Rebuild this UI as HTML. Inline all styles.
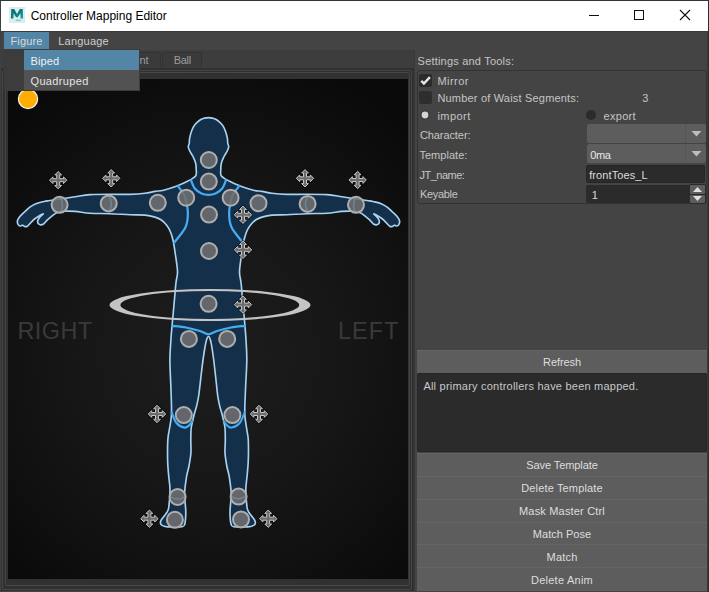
<!DOCTYPE html>
<html><head><meta charset="utf-8">
<style>
*{box-sizing:border-box;margin:0;padding:0}
html,body{width:709px;height:592px;overflow:hidden;background:#444444;font-family:"Liberation Sans",sans-serif;}
.a{position:absolute}
.t{position:absolute;white-space:pre;font-size:11px;color:#c4c4c4;line-height:1}
</style></head><body>
<!-- window frame -->
<div class="a" style="left:0;top:0;width:709px;height:592px;background:#2e2e2e"></div>
<div class="a" style="left:1px;top:31px;width:707px;height:561px;background:#444"></div>
<!-- title bar -->
<div class="a" style="left:1px;top:1px;width:707px;height:30px;background:#ffffff"></div>
<!-- maya icon -->
<div class="a" style="left:9px;top:7px;width:16px;height:16px;background:#d9eeee"></div>
<svg class="a" style="left:9px;top:7px" width="16" height="16" viewBox="0 0 16 16">
 <defs><linearGradient id="mg" x1="0" y1="0" x2="1" y2="1"><stop offset="0" stop-color="#0d6a70"/><stop offset="0.5" stop-color="#0f7d80"/><stop offset="1" stop-color="#1ba3a3"/></linearGradient></defs>
 <path d="M1.9 11.6 L2.3 2 L5.2 2 L8 7 L10.8 2 L13.7 2 L14.1 11.6 L11.6 11.6 L11.4 6.2 L8.9 10.2 L7.1 10.2 L4.6 6.2 L4.4 11.6 Z" fill="url(#mg)"/>
 <rect x="6.8" y="12.7" width="5" height="1" fill="#6ab8b8"/>
</svg>
<!-- window buttons -->
<div class="a" style="left:589px;top:15px;width:10px;height:1px;background:#111"></div>
<div class="a" style="left:634px;top:10px;width:10px;height:10px;border:1px solid #111"></div>
<svg class="a" style="left:679px;top:9px" width="12" height="12" viewBox="0 0 12 12"><path d="M1 1 L11 11 M11 1 L1 11" stroke="#111" stroke-width="1.1"/></svg>

<!-- menu bar -->
<div class="a" style="left:1px;top:31px;width:707px;height:1px;background:#3a3a3a"></div>
<div class="a" style="left:4px;top:32px;width:45px;height:17px;background:#5285a6"></div>

<!-- tab widget -->
<div class="a" style="left:1px;top:50px;width:414px;height:541px;background:#3d3d3d"></div>
<div class="a" style="left:83px;top:52px;width:78px;height:17px;background:#3a3a3a;border:1px solid #333;border-bottom:none;border-radius:3px 3px 0 0"></div>
<div class="a" style="left:162px;top:52px;width:40px;height:17px;background:#3a3a3a;border:1px solid #333;border-bottom:none;border-radius:3px 3px 0 0"></div>
<!-- frame -->
<div class="a" style="left:1px;top:68px;width:413px;height:523px;border:1px solid #333;background:#2f2f2f"></div>
<div class="a" style="left:2px;top:70px;width:410px;height:520px;border:1px solid #464646;border-radius:2px;background:#303030"></div>
<div class="a" style="left:5px;top:72px;width:405px;height:514px;border:1px solid #474747;border-radius:2px;background:#313131"></div>
<!-- figure canvas -->
<div class="a" style="left:8px;top:79px;width:400px;height:500px;background:radial-gradient(ellipse 72% 62% at 50% 55%,#1d1d1d 0%,#171717 45%,#0a0a0a 100%)"></div>

<!-- right panel -->
<div class="a" style="left:414px;top:50px;width:1px;height:541px;background:#393939"></div>
<div class="a" style="left:417px;top:70px;width:290px;height:134px;border:1px solid #333;border-radius:3px;background:#444"></div>
<div class="a" style="left:419px;top:74px;width:13px;height:13px;background:#2b2b2b;border-radius:2px"></div>
<svg class="a" style="left:419px;top:74px" width="13" height="13" viewBox="0 0 13 13"><path d="M2.3 6.9 L4.9 9.6 L10.9 3.1" stroke="#e6e6e6" stroke-width="2.4" fill="none" stroke-linejoin="miter"/></svg>
<div class="a" style="left:419px;top:91px;width:13px;height:13px;background:#2e2e2e;border-radius:2px"></div>
<svg class="a" style="left:418px;top:108px" width="14" height="14" viewBox="0 0 14 14"><circle cx="7" cy="7" r="4.6" fill="#323232"/><circle cx="7" cy="7" r="3.4" fill="#d4d4d4"/></svg>
<div class="a" style="left:586px;top:110px;width:10px;height:10px;border-radius:50%;background:#2b2b2b"></div>

<div class="a" style="left:587px;top:124px;width:119px;height:19px;background:#5d5d5d;border-radius:2px"></div>
<div class="a" style="left:685px;top:124px;width:1px;height:19px;background:#555"></div>
<svg class="a" style="left:691px;top:131px" width="11" height="6" viewBox="0 0 11 6"><path d="M0.5 0 H10.5 L5.5 5.5 Z" fill="#bdbdbd"/></svg>
<div class="a" style="left:587px;top:144px;width:119px;height:19px;background:#5d5d5d;border-radius:2px"></div>
<div class="a" style="left:685px;top:144px;width:1px;height:19px;background:#555"></div>
<svg class="a" style="left:691px;top:151px" width="11" height="6" viewBox="0 0 11 6"><path d="M0.5 0 H10.5 L5.5 5.5 Z" fill="#bdbdbd"/></svg>
<div class="a" style="left:586px;top:165px;width:119px;height:18px;background:#2b2b2b;border:1px solid #262626;border-radius:2px"></div>
<div class="a" style="left:586px;top:185px;width:104px;height:18px;background:#2b2b2b;border-radius:2px"></div>
<div class="a" style="left:689px;top:184px;width:17px;height:20px;background:#2b2b2b;border-radius:2px"></div>
<div class="a" style="left:690px;top:185px;width:15px;height:9px;background:#5d5d5d;border-radius:1px"></div>
<svg class="a" style="left:693px;top:187px" width="9" height="5" viewBox="0 0 9 5"><path d="M0 5 H9 L4.5 0 Z" fill="#e0e0e0"/></svg>
<div class="a" style="left:690px;top:195px;width:15px;height:8px;background:#5d5d5d;border-radius:1px"></div>
<svg class="a" style="left:693px;top:196px" width="9" height="5" viewBox="0 0 9 5"><path d="M0 0 H9 L4.5 5 Z" fill="#e0e0e0"/></svg>

<!-- refresh -->
<div class="a" style="left:417px;top:350px;width:290px;height:23px;background:#5d5d5d;border-top:1px solid #656565"></div>
<div class="a" style="left:417px;top:373px;width:290px;height:79px;background:#2b2b2b;border:1px solid #262626;border-radius:2px"></div>

<!-- buttons -->
<div class="a" style="left:417px;top:453px;width:290px;height:138px;background:#5d5d5d;border-top:1px solid #656565"></div>
<div class="a" style="left:417px;top:476px;width:290px;height:1px;background:#656565"></div>
<div class="a" style="left:417px;top:499px;width:290px;height:1px;background:#656565"></div>
<div class="a" style="left:417px;top:522px;width:290px;height:1px;background:#656565"></div>
<div class="a" style="left:417px;top:544px;width:290px;height:1px;background:#656565"></div>
<div class="a" style="left:417px;top:567px;width:290px;height:1px;background:#656565"></div>
<div class="a" style="left:707px;top:31px;width:2px;height:561px;background:#3a3a3a"></div><div class="a" style="left:708px;top:0;width:1px;height:592px;background:#2e2e2e"></div>

<div class="a" style="left:0;top:0;width:1px;height:592px;background:#3b4148"></div><div class="a" style="left:0;top:0;width:709px;height:1px;background:#30353b"></div>
<div class="t" style="left:30.7px;top:10px;font-size:12px;letter-spacing:0.0px;color:#000">Controller Mapping Editor</div>
<div class="t" style="left:10.5px;top:36px;font-size:11.0px;letter-spacing:0.13px;color:#dadada">Figure</div>
<div class="t" style="left:58.2px;top:36px;font-size:11.0px;letter-spacing:0.23px;color:#cfcfcf">Language</div>
<div class="t" style="left:173.8px;top:55px;font-size:11.0px;letter-spacing:-0.33px;color:#9c9c9c">Ball</div>
<div class="t" style="left:122.9px;top:55px;font-size:11.0px;letter-spacing:0.0px;color:#9c9c9c">Front</div>
<div class="t" style="left:417.6px;top:56px;font-size:11.0px;letter-spacing:0.2px;color:#c4c4c4">Settings and Tools:</div>
<div class="t" style="left:437.4px;top:76px;font-size:11.0px;letter-spacing:0.46px;color:#c4c4c4">Mirror</div>
<div class="t" style="left:437.4px;top:93px;font-size:11.0px;letter-spacing:0.19px;color:#c4c4c4">Number of Waist Segments:</div>
<div class="t" style="left:642.2px;top:93px;font-size:11.0px;letter-spacing:0px;color:#c4c4c4">3</div>
<div class="t" style="left:437.4px;top:111px;font-size:11.0px;letter-spacing:0.45px;color:#c4c4c4">import</div>
<div class="t" style="left:603.6px;top:111px;font-size:11.0px;letter-spacing:0.27px;color:#c4c4c4">export</div>
<div class="t" style="left:419.9px;top:130px;font-size:11.0px;letter-spacing:-0.08px;color:#c4c4c4">Character:</div>
<div class="t" style="left:419.4px;top:150px;font-size:11.0px;letter-spacing:0.04px;color:#c4c4c4">Template:</div>
<div class="t" style="left:590.2px;top:150px;font-size:11.0px;letter-spacing:-0.3px;color:#e8e8e8">0ma</div>
<div class="t" style="left:419.4px;top:170px;font-size:11.0px;letter-spacing:-0.49px;color:#c4c4c4">JT_name:</div>
<div class="t" style="left:589.2px;top:170px;font-size:11.0px;letter-spacing:0.1px;color:#dcdcdc">frontToes_L</div>
<div class="t" style="left:419.9px;top:189px;font-size:11.0px;letter-spacing:-0.31px;color:#c4c4c4">Keyable</div>
<div class="t" style="left:591.8px;top:190px;font-size:11.0px;letter-spacing:0px;color:#dcdcdc">1</div>
<div class="t" style="left:417px;top:357px;font-size:11.0px;letter-spacing:-0.08px;color:#dedede;width:290px;text-align:center">Refresh</div>
<div class="t" style="left:423.4px;top:381px;font-size:11.0px;letter-spacing:0.22px;color:#c8c8c8">All primary controllers have been mapped.</div>
<div class="t" style="left:417px;top:460px;font-size:11.0px;letter-spacing:-0.08px;color:#dedede;width:290px;text-align:center">Save Template</div>
<div class="t" style="left:417px;top:483px;font-size:11.0px;letter-spacing:0.15px;color:#dedede;width:290px;text-align:center">Delete Template</div>
<div class="t" style="left:417px;top:506px;font-size:11.0px;letter-spacing:0.18px;color:#dedede;width:290px;text-align:center">Mask Master Ctrl</div>
<div class="t" style="left:417px;top:529px;font-size:11.0px;letter-spacing:0.03px;color:#dedede;width:290px;text-align:center">Match Pose</div>
<div class="t" style="left:417px;top:552px;font-size:11.0px;letter-spacing:0.2px;color:#dedede;width:290px;text-align:center">Match</div>
<div class="t" style="left:417px;top:575px;font-size:11.0px;letter-spacing:0.24px;color:#dedede;width:290px;text-align:center">Delete Anim</div>
<svg class="a" style="left:0;top:0" width="709" height="592" viewBox="0 0 709 592">
<defs><clipPath id="cv"><rect x="8" y="79" width="400" height="500"/></clipPath><path id="mv" d="M-1.50 -1.50 L-1.50 -5.30 L-3.40 -5.30 L0.00 -8.70 L3.40 -5.30 L1.50 -5.30 L1.50 -1.50 L5.30 -1.50 L5.30 -3.40 L8.70 -0.00 L5.30 3.40 L5.30 1.50 L1.50 1.50 L1.50 5.30 L3.40 5.30 L0.00 8.70 L-3.40 5.30 L-1.50 5.30 L-1.50 1.50 L-5.30 1.50 L-5.30 3.40 L-8.70 0.00 L-5.30 -3.40 L-5.30 -1.50 Z"/></defs>
<g clip-path="url(#cv)">
<text x="17.4" y="338.7" font-family="Liberation Sans" font-size="23.4" letter-spacing="0.5" fill="#3a3a3a">RIGHT</text>
<text x="338" y="338.7" font-family="Liberation Sans" font-size="23.4" letter-spacing="1.1" fill="#3a3a3a">LEFT</text>
<path d="M208.5 117.6 C207.2 117.6 205.9 117.7 204.6 118.1 C203.2 118.5 202.0 118.7 200.4 119.8 C198.8 120.9 196.5 122.7 195.0 124.6 C193.5 126.5 192.5 128.7 191.6 131.0 C190.7 133.3 190.0 136.4 189.6 138.4 C189.2 140.4 189.5 141.6 189.3 143.0 C189.1 144.4 188.2 145.6 188.3 147.0 C188.4 148.4 189.2 149.9 190.0 151.5 C190.8 153.1 192.1 154.6 193.0 156.5 C193.9 158.4 195.1 160.8 195.6 163.0 C196.1 165.2 196.2 167.3 196.2 169.5 C196.2 171.7 197.0 174.1 195.6 176.0 C194.2 177.9 191.2 179.3 188.0 181.0 C184.8 182.7 180.3 184.7 176.2 186.2 C172.1 187.7 167.0 189.3 163.5 190.2 C160.0 191.1 158.1 190.9 155.0 191.4 C151.9 191.9 149.2 192.8 145.0 193.3 C140.8 193.8 135.8 194.2 130.0 194.4 C124.2 194.6 116.7 194.2 110.0 194.2 C103.3 194.2 95.8 194.2 90.0 194.6 C84.2 195.0 79.7 196.1 75.0 196.8 C70.3 197.5 66.2 198.1 62.0 198.7 C57.8 199.3 53.0 200.0 50.0 200.5 C47.0 201.0 46.5 200.9 44.0 201.5 C41.5 202.1 37.7 202.9 35.3 203.9 C32.9 204.9 31.3 206.0 29.5 207.3 C27.7 208.7 26.2 210.4 24.5 212.0 C22.8 213.6 20.7 215.5 19.5 217.0 C18.3 218.5 17.6 219.7 17.4 221.0 C17.2 222.3 17.7 223.8 18.2 224.6 C18.7 225.4 19.6 225.9 20.3 226.0 C21.0 226.1 21.9 225.1 22.6 225.2 C23.3 225.3 23.9 226.3 24.6 226.5 C25.3 226.7 26.2 226.8 27.0 226.4 C27.8 226.0 28.6 225.0 29.6 224.0 C30.6 223.0 31.7 221.5 33.0 220.3 C34.3 219.1 35.8 218.1 37.5 217.0 C39.2 215.9 42.8 213.8 43.2 213.8 C43.6 213.8 40.7 216.1 39.8 217.2 C38.9 218.3 38.1 219.4 37.8 220.5 C37.5 221.6 37.7 222.9 38.2 223.6 C38.7 224.3 39.7 224.8 40.6 224.9 C41.5 225.0 42.5 224.7 43.5 224.0 C44.5 223.3 45.2 222.0 46.5 220.8 C47.8 219.6 49.3 218.1 51.0 216.8 C52.7 215.5 54.7 213.7 56.7 212.8 C58.7 211.9 60.0 211.5 63.0 211.3 C66.0 211.1 70.5 211.1 75.0 211.4 C79.5 211.7 84.2 212.9 90.0 213.3 C95.8 213.7 103.3 213.4 110.0 213.7 C116.7 213.9 124.2 214.6 130.0 214.8 C135.8 215.0 140.8 214.7 145.0 215.1 C149.2 215.5 152.3 216.3 155.0 217.1 C157.7 217.9 159.1 218.5 161.0 219.8 C162.9 221.1 164.9 223.0 166.5 225.0 C168.1 227.0 169.4 229.3 170.5 232.0 C171.6 234.7 172.4 237.3 173.2 241.0 C174.0 244.7 174.6 248.9 175.3 254.0 C176.0 259.1 177.4 266.8 177.5 271.5 C177.6 276.2 176.6 277.4 176.0 282.5 C175.4 287.6 174.9 295.0 174.2 302.3 C173.5 309.6 172.6 320.2 172.0 326.5 C171.4 332.8 171.2 334.4 170.9 340.0 C170.6 345.6 169.9 351.7 169.9 360.0 C169.9 368.3 170.7 381.0 171.0 390.0 C171.3 399.0 171.7 407.7 171.5 414.0 C171.3 420.3 170.2 423.7 169.6 428.0 C169.0 432.3 168.1 434.7 167.8 440.0 C167.5 445.3 167.5 454.2 167.6 460.0 C167.7 465.8 168.2 470.0 168.6 475.0 C169.0 480.0 170.0 484.7 170.0 490.0 C170.0 495.3 169.3 503.2 168.8 507.0 C168.3 510.8 167.8 510.8 166.8 512.5 C165.8 514.2 164.0 516.0 163.0 517.5 C162.0 519.0 160.9 520.3 160.6 521.5 C160.3 522.7 160.5 524.0 161.2 524.8 C161.9 525.6 163.2 526.1 165.0 526.5 C166.8 526.9 169.2 527.0 172.0 527.0 C174.8 527.0 179.9 527.2 182.0 526.7 C184.1 526.2 184.2 526.5 184.8 524.0 C185.4 521.5 185.8 517.0 185.8 512.0 C185.8 507.0 184.5 499.8 184.6 494.0 C184.7 488.2 185.8 481.7 186.5 477.0 C187.2 472.3 188.3 470.0 189.0 466.0 C189.7 462.0 190.6 457.3 190.9 453.0 C191.2 448.7 190.8 444.2 190.8 440.0 C190.9 435.8 190.7 432.0 191.2 428.0 C191.7 424.0 192.9 419.7 193.8 416.0 C194.7 412.3 195.8 409.5 196.6 406.0 C197.4 402.5 198.0 400.7 198.8 395.0 C199.6 389.3 200.6 379.5 201.5 372.0 C202.4 364.5 203.6 355.5 204.5 350.0 C205.4 344.5 206.1 341.2 206.8 339.0 C207.5 336.8 207.9 336.5 208.5 336.5 C209.1 336.5 209.5 336.8 210.1 339.0 C210.8 341.2 211.5 344.5 212.3 350.0 C213.2 355.5 214.3 364.5 215.1 372.0 C216.0 379.5 216.9 389.3 217.6 395.0 C218.4 400.7 218.9 402.5 219.7 406.0 C220.6 409.5 221.6 412.3 222.5 416.0 C223.3 419.7 224.5 424.0 225.0 428.0 C225.4 432.0 225.2 435.8 225.3 440.0 C225.3 444.2 224.8 448.7 225.0 453.0 C225.3 457.3 226.1 462.0 226.8 466.0 C227.5 470.0 228.6 472.3 229.3 477.0 C230.0 481.7 231.1 488.2 231.2 494.0 C231.3 499.8 230.0 507.0 230.0 512.0 C230.0 517.0 230.4 521.5 231.0 524.0 C231.6 526.5 231.7 526.2 233.8 526.7 C235.9 527.2 241.0 527.0 243.8 527.0 C246.6 527.0 249.0 526.9 250.8 526.5 C252.6 526.1 253.9 525.6 254.6 524.8 C255.3 524.0 255.5 522.7 255.2 521.5 C254.9 520.3 253.8 519.0 252.8 517.5 C251.8 516.0 250.0 514.2 249.0 512.5 C248.0 510.8 247.5 510.8 247.0 507.0 C246.5 503.2 245.8 495.3 245.8 490.0 C245.8 484.7 246.8 480.0 247.2 475.0 C247.6 470.0 248.1 465.8 248.3 460.0 C248.5 454.2 248.5 445.3 248.3 440.0 C248.0 434.7 247.1 432.3 246.6 428.0 C246.0 423.7 245.0 420.3 244.8 414.0 C244.6 407.7 245.1 399.0 245.5 390.0 C245.8 381.0 246.8 368.3 246.8 360.0 C246.9 351.7 246.3 345.6 246.0 340.0 C245.7 334.4 245.5 332.8 245.0 326.5 C244.5 320.2 243.5 309.6 242.8 302.3 C242.1 295.0 241.6 287.6 241.0 282.5 C240.4 277.4 239.4 276.2 239.5 271.5 C239.6 266.8 241.0 259.1 241.7 254.0 C242.4 248.9 243.0 244.7 243.8 241.0 C244.6 237.3 245.4 234.7 246.5 232.0 C247.6 229.3 248.9 227.0 250.5 225.0 C252.1 223.0 254.1 221.1 256.0 219.8 C257.9 218.5 259.3 217.9 262.0 217.1 C264.7 216.3 267.8 215.5 272.0 215.1 C276.2 214.7 281.2 215.0 287.0 214.8 C292.8 214.6 300.3 213.9 307.0 213.7 C313.7 213.4 321.2 213.7 327.0 213.3 C332.8 212.9 337.5 211.7 342.0 211.4 C346.5 211.1 350.9 211.1 354.0 211.3 C357.1 211.5 358.3 211.9 360.3 212.8 C362.3 213.7 364.3 215.5 366.0 216.8 C367.7 218.1 369.2 219.6 370.5 220.8 C371.8 222.0 372.5 223.3 373.5 224.0 C374.5 224.7 375.5 225.0 376.4 224.9 C377.3 224.8 378.3 224.3 378.8 223.6 C379.3 222.9 379.5 221.6 379.2 220.5 C378.9 219.4 378.1 218.3 377.2 217.2 C376.3 216.1 373.4 213.8 373.8 213.8 C374.2 213.8 377.8 215.9 379.5 217.0 C381.2 218.1 382.7 219.1 384.0 220.3 C385.3 221.5 386.4 223.0 387.4 224.0 C388.4 225.0 389.2 226.0 390.0 226.4 C390.8 226.8 391.7 226.7 392.4 226.5 C393.1 226.3 393.7 225.3 394.4 225.2 C395.1 225.1 396.0 226.1 396.7 226.0 C397.4 225.9 398.3 225.4 398.8 224.6 C399.3 223.8 399.8 222.3 399.6 221.0 C399.4 219.7 398.7 218.5 397.5 217.0 C396.3 215.5 394.2 213.6 392.5 212.0 C390.8 210.4 389.3 208.7 387.5 207.3 C385.7 206.0 384.1 204.9 381.7 203.9 C379.3 202.9 375.4 202.1 373.0 201.5 C370.6 200.9 370.0 201.0 367.0 200.5 C364.0 200.0 359.2 199.3 355.0 198.7 C350.8 198.1 346.7 197.5 342.0 196.8 C337.3 196.1 332.8 195.0 327.0 194.6 C321.2 194.2 313.7 194.2 307.0 194.2 C300.3 194.2 292.8 194.6 287.0 194.4 C281.2 194.2 276.2 193.8 272.0 193.3 C267.8 192.8 265.1 191.9 262.0 191.4 C258.9 190.9 257.0 191.1 253.5 190.2 C250.0 189.3 244.9 187.7 240.8 186.2 C236.7 184.7 232.2 182.7 229.0 181.0 C225.8 179.3 222.8 177.9 221.4 176.0 C220.0 174.1 220.8 171.7 220.8 169.5 C220.8 167.3 220.9 165.2 221.4 163.0 C221.9 160.8 223.1 158.4 224.0 156.5 C224.9 154.6 226.2 153.1 227.0 151.5 C227.8 149.9 228.6 148.4 228.7 147.0 C228.8 145.6 227.9 144.4 227.7 143.0 C227.5 141.6 227.8 140.4 227.4 138.4 C227.0 136.4 226.3 133.3 225.4 131.0 C224.5 128.7 223.5 126.5 222.0 124.6 C220.5 122.7 218.2 120.9 216.6 119.8 C215.0 118.7 213.8 118.5 212.4 118.1 C211.1 117.7 209.8 117.6 208.5 117.6 Z" fill="#142f4a" stroke="#a8d2f0" stroke-width="1.65" stroke-linejoin="round"/>
<path d="M191.0 180.2 C191.6 181.6 193.1 186.3 194.8 188.5 C196.6 190.7 199.2 192.5 201.5 193.6 C203.8 194.7 206.2 194.9 208.5 194.9 C210.8 194.9 213.2 194.7 215.5 193.6 C217.8 192.5 220.4 190.7 222.2 188.5 C223.9 186.3 225.4 181.6 226.0 180.2" fill="none" stroke="#45aef0" stroke-width="2.2" stroke-linecap="round"/>
<path d="M177.7 185.9 C178.8 187.6 182.9 191.8 184.6 196.0 C186.3 200.2 187.6 205.8 187.8 211.0 C188.0 216.2 187.9 221.8 185.6 227.0 C183.3 232.2 176.1 239.9 174.2 242.5" fill="none" stroke="#45aef0" stroke-width="2.2" stroke-linecap="round"/>
<path d="M239.3 185.9 C238.2 187.6 234.1 191.8 232.4 196.0 C230.7 200.2 229.4 205.8 229.2 211.0 C229.0 216.2 229.1 221.8 231.4 227.0 C233.7 232.2 240.9 239.9 242.8 242.5" fill="none" stroke="#45aef0" stroke-width="2.2" stroke-linecap="round"/>
<path d="M172.0 325.8 C174.3 326.1 181.3 326.6 186.0 327.5 C190.7 328.4 196.2 329.9 200.0 331.0 C203.8 332.1 205.7 334.3 208.5 334.3 C211.3 334.3 213.2 332.1 217.0 331.0 C220.7 329.9 226.3 328.4 231.0 327.5 C235.7 326.6 242.7 326.1 245.0 325.8" fill="none" stroke="#45aef0" stroke-width="2.2" stroke-linecap="round"/>
<path d="M171.6 412.3 C172.4 414.1 174.4 420.4 176.5 423.0 C178.6 425.6 182.3 427.2 184.4 427.6 C186.5 428.0 187.7 426.6 189.0 425.5 C190.3 424.4 191.8 421.8 192.4 421.0" fill="none" stroke="#45aef0" stroke-width="2.2" stroke-linecap="round"/>
<path d="M244.7 412.3 C243.9 414.1 241.9 420.4 239.7 423.0 C237.5 425.6 233.9 427.2 231.8 427.6 C229.7 428.0 228.5 426.6 227.2 425.5 C225.9 424.4 224.4 421.8 223.8 421.0" fill="none" stroke="#45aef0" stroke-width="2.0" stroke-linecap="round"/>
<path fill-rule="evenodd" fill="#c4c4c4" d="M109.5 305 A100.5 16 0 1 0 310.5 305 A100.5 16 0 1 0 109.5 305 Z M120.4 305 A89.4 14.1 0 1 0 299.2 305 A89.4 14.1 0 1 0 120.4 305 Z"/>
<circle cx="208.8" cy="160.0" r="8" fill="#6e6e6e" fill-opacity="0.88" stroke="#aeaeae" stroke-width="2"/>
<circle cx="208.8" cy="181.6" r="8" fill="#6e6e6e" fill-opacity="0.88" stroke="#aeaeae" stroke-width="2"/>
<circle cx="209.0" cy="214.6" r="8" fill="#6e6e6e" fill-opacity="0.88" stroke="#aeaeae" stroke-width="2"/>
<circle cx="209.0" cy="251.0" r="8" fill="#6e6e6e" fill-opacity="0.88" stroke="#aeaeae" stroke-width="2"/>
<circle cx="208.6" cy="303.8" r="8" fill="#6e6e6e" fill-opacity="0.88" stroke="#aeaeae" stroke-width="2"/>
<circle cx="186.2" cy="197.7" r="8" fill="#6e6e6e" fill-opacity="0.88" stroke="#aeaeae" stroke-width="2"/>
<circle cx="230.6" cy="197.7" r="8" fill="#6e6e6e" fill-opacity="0.88" stroke="#aeaeae" stroke-width="2"/>
<circle cx="157.8" cy="202.8" r="8" fill="#6e6e6e" fill-opacity="0.88" stroke="#aeaeae" stroke-width="2"/>
<circle cx="258.5" cy="203.2" r="8" fill="#6e6e6e" fill-opacity="0.88" stroke="#aeaeae" stroke-width="2"/>
<circle cx="108.7" cy="203.4" r="8" fill="#6e6e6e" fill-opacity="0.88" stroke="#aeaeae" stroke-width="2"/>
<circle cx="307.6" cy="203.9" r="8" fill="#6e6e6e" fill-opacity="0.88" stroke="#aeaeae" stroke-width="2"/>
<circle cx="59.6" cy="204.8" r="8" fill="#6e6e6e" fill-opacity="0.88" stroke="#aeaeae" stroke-width="2"/>
<circle cx="356.0" cy="204.8" r="8" fill="#6e6e6e" fill-opacity="0.88" stroke="#aeaeae" stroke-width="2"/>
<circle cx="188.9" cy="338.9" r="8" fill="#6e6e6e" fill-opacity="0.88" stroke="#aeaeae" stroke-width="2"/>
<circle cx="227.2" cy="338.9" r="8" fill="#6e6e6e" fill-opacity="0.88" stroke="#aeaeae" stroke-width="2"/>
<circle cx="183.8" cy="415.1" r="8" fill="#6e6e6e" fill-opacity="0.88" stroke="#aeaeae" stroke-width="2"/>
<circle cx="232.4" cy="415.1" r="8" fill="#6e6e6e" fill-opacity="0.88" stroke="#aeaeae" stroke-width="2"/>
<circle cx="177.6" cy="497.0" r="8" fill="#6e6e6e" fill-opacity="0.88" stroke="#aeaeae" stroke-width="2"/>
<circle cx="238.6" cy="496.6" r="8" fill="#6e6e6e" fill-opacity="0.88" stroke="#aeaeae" stroke-width="2"/>
<circle cx="174.9" cy="519.8" r="8" fill="#6e6e6e" fill-opacity="0.88" stroke="#aeaeae" stroke-width="2"/>
<circle cx="241.0" cy="519.4" r="8" fill="#6e6e6e" fill-opacity="0.88" stroke="#aeaeae" stroke-width="2"/>
<path d="M109 195.5 Q113.6 203.5 109.2 212" fill="none" stroke="#8fb8d4" stroke-opacity="0.4" stroke-width="1.4"/>
<path d="M60.2 197 Q64.4 205 60.6 213" fill="none" stroke="#8fb8d4" stroke-opacity="0.4" stroke-width="1.4"/>
<path d="M307.8 196 Q303.2 204 307.6 212" fill="none" stroke="#8fb8d4" stroke-opacity="0.4" stroke-width="1.4"/>
<path d="M355.8 197 Q351.6 205 355.4 213" fill="none" stroke="#8fb8d4" stroke-opacity="0.4" stroke-width="1.4"/>
<path d="M171.2 497 Q177.8 501.2 184.4 497" fill="none" stroke="#8fb8d4" stroke-opacity="0.4" stroke-width="1.4"/>
<path d="M231.6 496.6 Q238.2 500.8 244.8 496.6" fill="none" stroke="#8fb8d4" stroke-opacity="0.4" stroke-width="1.4"/>
<use href="#mv" transform="translate(58.20 180.20)" fill="#6a6a6a" stroke="#000" stroke-opacity="0.6" stroke-width="2.2" stroke-linejoin="round"/>
<use href="#mv" transform="translate(58.20 180.20)" fill="#6c6c6c" stroke="#c6c6c6" stroke-width="1.0" stroke-linejoin="round"/>
<use href="#mv" transform="translate(111.20 178.30)" fill="#6a6a6a" stroke="#000" stroke-opacity="0.6" stroke-width="2.2" stroke-linejoin="round"/>
<use href="#mv" transform="translate(111.20 178.30)" fill="#6c6c6c" stroke="#c6c6c6" stroke-width="1.0" stroke-linejoin="round"/>
<use href="#mv" transform="translate(305.00 178.30)" fill="#6a6a6a" stroke="#000" stroke-opacity="0.6" stroke-width="2.2" stroke-linejoin="round"/>
<use href="#mv" transform="translate(305.00 178.30)" fill="#6c6c6c" stroke="#c6c6c6" stroke-width="1.0" stroke-linejoin="round"/>
<use href="#mv" transform="translate(357.60 180.00)" fill="#6a6a6a" stroke="#000" stroke-opacity="0.6" stroke-width="2.2" stroke-linejoin="round"/>
<use href="#mv" transform="translate(357.60 180.00)" fill="#6c6c6c" stroke="#c6c6c6" stroke-width="1.0" stroke-linejoin="round"/>
<use href="#mv" transform="translate(243.00 214.80)" fill="#6a6a6a" stroke="#000" stroke-opacity="0.6" stroke-width="2.2" stroke-linejoin="round"/>
<use href="#mv" transform="translate(243.00 214.80)" fill="#6c6c6c" stroke="#c6c6c6" stroke-width="1.0" stroke-linejoin="round"/>
<use href="#mv" transform="translate(243.00 249.80)" fill="#6a6a6a" stroke="#000" stroke-opacity="0.6" stroke-width="2.2" stroke-linejoin="round"/>
<use href="#mv" transform="translate(243.00 249.80)" fill="#6c6c6c" stroke="#c6c6c6" stroke-width="1.0" stroke-linejoin="round"/>
<use href="#mv" transform="translate(243.00 304.60)" fill="#6a6a6a" stroke="#000" stroke-opacity="0.6" stroke-width="2.2" stroke-linejoin="round"/>
<use href="#mv" transform="translate(243.00 304.60)" fill="#6c6c6c" stroke="#c6c6c6" stroke-width="1.0" stroke-linejoin="round"/>
<use href="#mv" transform="translate(157.00 414.00)" fill="#6a6a6a" stroke="#000" stroke-opacity="0.6" stroke-width="2.2" stroke-linejoin="round"/>
<use href="#mv" transform="translate(157.00 414.00)" fill="#6c6c6c" stroke="#c6c6c6" stroke-width="1.0" stroke-linejoin="round"/>
<use href="#mv" transform="translate(259.00 414.00)" fill="#6a6a6a" stroke="#000" stroke-opacity="0.6" stroke-width="2.2" stroke-linejoin="round"/>
<use href="#mv" transform="translate(259.00 414.00)" fill="#6c6c6c" stroke="#c6c6c6" stroke-width="1.0" stroke-linejoin="round"/>
<use href="#mv" transform="translate(149.40 518.70)" fill="#6a6a6a" stroke="#000" stroke-opacity="0.6" stroke-width="2.2" stroke-linejoin="round"/>
<use href="#mv" transform="translate(149.40 518.70)" fill="#6c6c6c" stroke="#c6c6c6" stroke-width="1.0" stroke-linejoin="round"/>
<use href="#mv" transform="translate(268.20 518.70)" fill="#6a6a6a" stroke="#000" stroke-opacity="0.6" stroke-width="2.2" stroke-linejoin="round"/>
<use href="#mv" transform="translate(268.20 518.70)" fill="#6c6c6c" stroke="#c6c6c6" stroke-width="1.0" stroke-linejoin="round"/>
<circle cx="28" cy="99" r="9.6" fill="#ffad00" stroke="#f4f4f4" stroke-width="1.2"/>
</g></svg>
<!-- dropdown menu -->
<div class="a" style="left:4px;top:49px;width:136px;height:42px;background:#3c3c3c"></div>
<div class="a" style="left:24px;top:50px;width:115px;height:20px;background:#5285a6"></div>
<div class="a" style="left:24px;top:70px;width:115px;height:20px;background:#525252"></div>
<div class="t" style="left:30.5px;top:56px;font-size:11.0px;letter-spacing:0.13px;color:#f0f0f0">Biped</div>
<div class="t" style="left:30.5px;top:76px;font-size:11.0px;letter-spacing:0.35px;color:#e4e4e4">Quadruped</div>
</body></html>
